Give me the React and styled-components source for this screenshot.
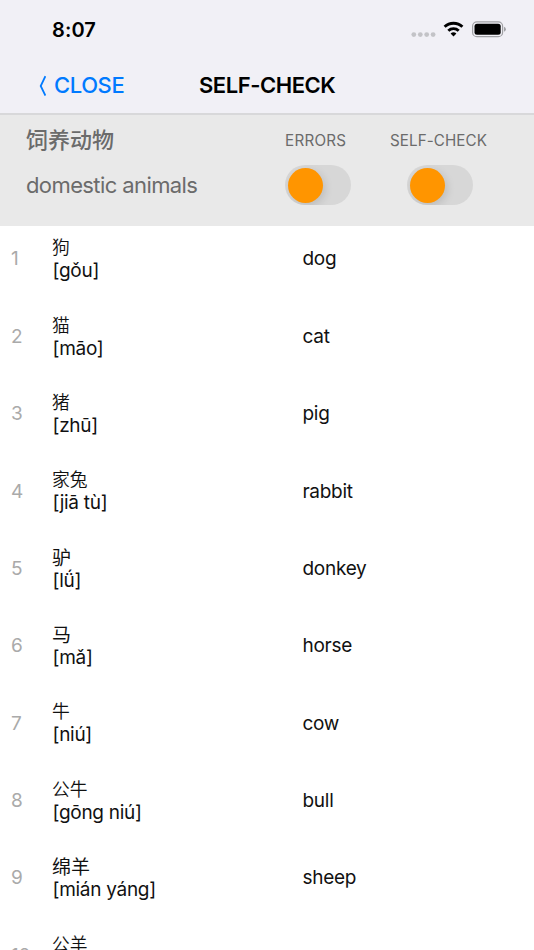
import React from "react";
import styled, { createGlobalStyle } from "styled-components";

const GlobalStyle = createGlobalStyle`
  body {
    margin: 0;
    background: #fff;
    font-family: Inter, "Noto Sans CJK SC", sans-serif;
  }
`;

const Screen = styled.div`
  width: 534px;
  height: 950px;
  overflow: hidden;
  background: #fff;
`;

const Header = styled.header`
  height: 113px;
  border-bottom: 2px solid #d8d8da;
  background: #f1f0f6;
`;

const StatusBar = styled.div`
  display: flex;
  justify-content: space-between;
  height: 58px;
  padding: 0 28px 0 52px;
`;

const Time = styled.span`
  font-size: 20px;
  font-weight: 600;
  line-height: 60px;
  letter-spacing: 0.1px;
`;

const NavBar = styled.nav`
  display: grid;
  grid-template-columns: 199px 1fr;
  height: 55px;
  line-height: 55px;
`;

const CloseButton = styled.a`
  display: flex;
  align-items: center;
  padding-left: 38px;
  gap: 8px;
  color: #007aff;
  font-size: 22px;
  font-weight: 550;
  letter-spacing: -0.4px;
`;

const Title = styled.div`
  font-size: 22px;
  font-weight: 570;
  letter-spacing: -0.45px;
`;

const Topic = styled.section`
  display: flex;
  height: 111px;
  background: #e9e9e9;
  color: #6b6b6b;
`;

const TopicNames = styled.div`
  flex: 0 0 259px;
  padding: 3px 0 0 26px;
`;

const TopicName = styled.div`
  font-size: 22px;
  font-weight: ${(props) => (props.$strong ? 500 : 400)};
  line-height: 45px;
  letter-spacing: ${(props) => (props.$strong ? "0" : "-0.6px")};
`;

const Option = styled.div`
  display: flex;
  flex: none;
  flex-direction: column;
  align-items: ${(props) => (props.$centered ? "center" : "flex-start")};
  width: ${(props) => (props.$centered ? "102px" : "104px")};
  padding-top: 15px;
`;

const OptionLabel = styled.span`
  height: 35px;
  margin-right: ${(props) => (props.$shifted ? "3px" : "0")};
  font-size: 15.2px;
  line-height: 21px;
  letter-spacing: ${(props) => (props.$shifted ? "0.1px" : "0.25px")};
  white-space: nowrap;
`;

const Track = styled.div`
  width: 66px;
  height: 40px;
  box-sizing: border-box;
  padding: 3px 2.5px;
  border-radius: 20px;
  background: #d7d7d7;
  overflow: hidden;
`;

const Knob = styled.div`
  width: 35px;
  height: 35px;
  border-radius: 50%;
  background: #ff9500;
  box-shadow: 2px 3px 8px rgba(0, 0, 0, 0.13);
`;

const WordList = styled.div`
  margin-top: -0.4px;
`;

const Row = styled.div`
  display: grid;
  grid-template-columns: 41.5px 250px 1fr;
  align-items: center;
  height: 65px;
  margin-bottom: 12.4px;
  padding-left: 11px;
  font-size: 19px;
  line-height: 23px;
  letter-spacing: -0.28px;
  color: #111;
`;

const Index = styled.span`
  padding-top: 1.5px;
  color: #aaa;
`;

const Hanzi = styled.div`
  height: 23px;
  margin-left: -0.5px;
  font-family: "Noto Sans CJK SC", sans-serif;
  font-size: ${(props) => (props.$large ? "19px" : "17.8px")};
  letter-spacing: 0;
  font-weight: ${(props) => (props.$large ? 400 : 350)};
`;

const Pinyin = styled.div`
  height: 22px;
  padding-top: 1px;
`;

const English = styled.span`
  padding-top: 1.5px;
`;

const words = [
  ["狗", "[gǒu]", "dog"],
  ["猫", "[māo]", "cat"],
  ["猪", "[zhū]", "pig"],
  ["家兔", "[jiā tù]", "rabbit"],
  ["驴", "[lǘ]", "donkey", true],
  ["马", "[mǎ]", "horse", true],
  ["牛", "[niú]", "cow"],
  ["公牛", "[gōng niú]", "bull"],
  ["绵羊", "[mián yáng]", "sheep", true],
  ["公羊", "[gōng yáng]", "ram"],
];

function StatusIcons() {
  return (
    <svg width="96" height="58" viewBox="410 0 96 58">
      <g fill="#c3c3c7">
        <circle cx="413.8" cy="34.6" r="2.4" />
        <circle cx="420.3" cy="34.6" r="2.4" />
        <circle cx="426.7" cy="34.6" r="2.4" />
        <circle cx="433.1" cy="34.6" r="2.4" />
      </g>
      <g fill="none" stroke="#000" strokeWidth="2.9">
        <path d="M444.6 26.8 A13 13 0 0 1 462.4 26.8" />
        <path d="M448.3 30.7 A7.6 7.6 0 0 1 458.7 30.7" />
      </g>
      <path d="M453.5 36.6 L450.6 33.6 A4.3 4.3 0 0 1 456.4 33.6 Z" fill="#000" />
      <rect x="472.6" y="21.8" width="30" height="14.9" rx="4.3" fill="none" stroke="#a0a0a4" strokeWidth="1.2" />
      <rect x="474.5" y="23.7" width="26.2" height="11.1" rx="2.5" fill="#000" />
      <path d="M504 26.8 Q505.9 27.6 505.9 29.3 Q505.9 31 504 31.8 Z" fill="#a0a0a4" />
    </svg>
  );
}

function Switch() {
  return (
    <Track>
      <Knob />
    </Track>
  );
}

export default function App() {
  return (
    <Screen>
      <GlobalStyle />
      <Header>
        <StatusBar>
          <Time>8:07</Time>
          <StatusIcons />
        </StatusBar>
        <NavBar>
          <CloseButton>
            <svg width="8" height="22" viewBox="0 0 8 22">
              <path d="M7.4 1.2 L2.7 11 L7.4 20.5" fill="none" stroke="#007aff" strokeWidth="1.8" />
            </svg>
            CLOSE
          </CloseButton>
          <Title>SELF-CHECK</Title>
        </NavBar>
      </Header>
      <Topic>
        <TopicNames>
          <TopicName $strong>饲养动物</TopicName>
          <TopicName>domestic animals</TopicName>
        </TopicNames>
        <Option>
          <OptionLabel>ERRORS</OptionLabel>
          <Switch />
        </Option>
        <Option $centered>
          <OptionLabel $shifted>SELF-CHECK</OptionLabel>
          <Switch />
        </Option>
      </Topic>
      <WordList>
        {words.map(([hanzi, pinyin, english, large], i) => (
          <Row key={hanzi}>
            <Index>{i + 1}</Index>
            <div>
              <Hanzi $large={large}>{hanzi}</Hanzi>
              <Pinyin>{pinyin}</Pinyin>
            </div>
            <English>{english}</English>
          </Row>
        ))}
      </WordList>
    </Screen>
  );
}
